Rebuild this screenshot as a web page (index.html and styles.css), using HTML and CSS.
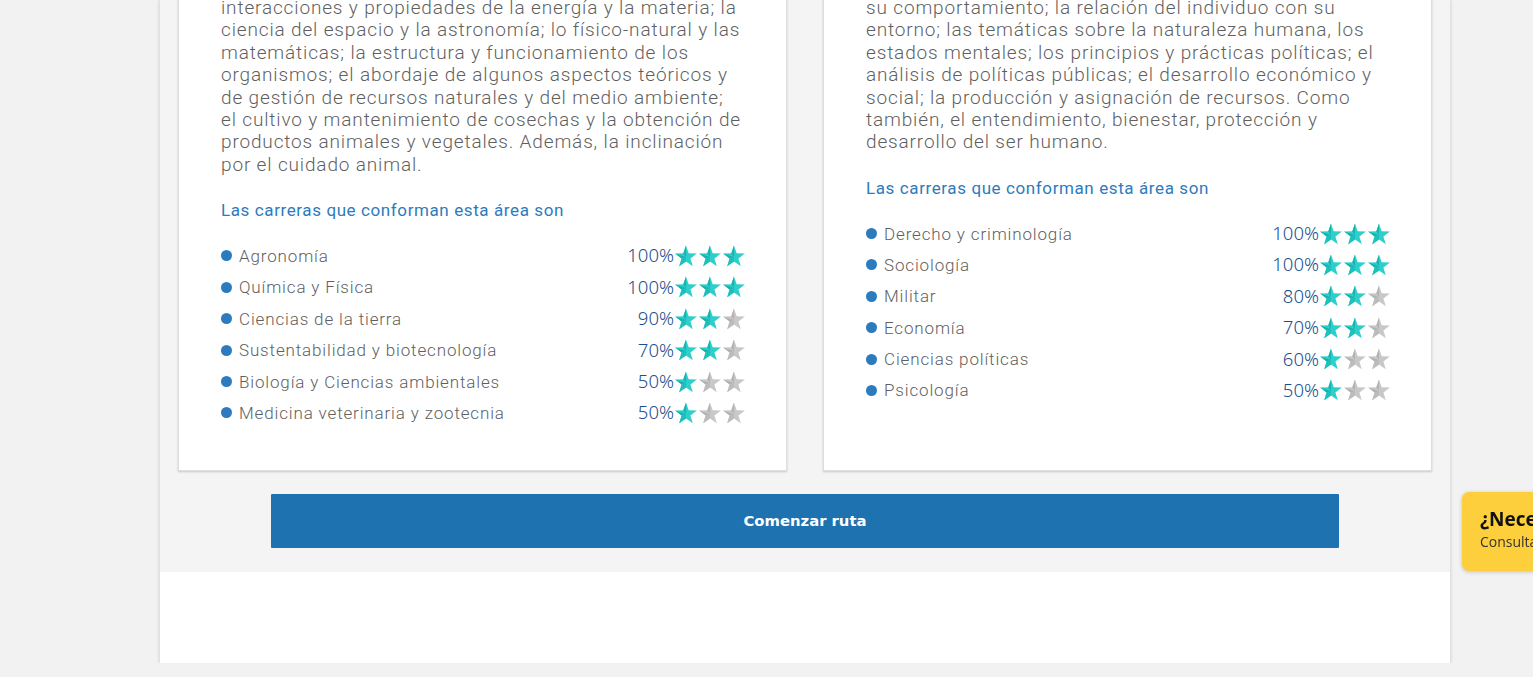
FILE: index.html
```html
<!DOCTYPE html>
<html lang="es">
<head>
<meta charset="utf-8">
<title>Áreas de interés</title>
<link rel="stylesheet" href="styles.css">
</head>
<body>
<svg width="0" height="0" class="defs">
  <defs>
    <symbol id="star-on" viewBox="0 0 24 24">
      <polygon fill="#2dcfcb" points="12,1.5 14.7,9.3 22.9,9.5 16.4,14.4 18.8,22.3 12,17.6 5.2,22.3 7.6,14.4 1.1,9.5 9.3,9.3"/>
      <polygon fill="#17b3ae" points="12,1.5 12,13 9.3,9.3"/>
      <polygon fill="#17b3ae" points="1.1,9.5 12,13 7.6,14.4"/>
      <polygon fill="#1fc0bb" points="12,13 12,17.6 5.2,22.3 7.6,14.4"/>
    </symbol>
    <symbol id="star-off" viewBox="0 0 24 24">
      <polygon fill="#c8c8c8" points="12,1.5 14.7,9.3 22.9,9.5 16.4,14.4 18.8,22.3 12,17.6 5.2,22.3 7.6,14.4 1.1,9.5 9.3,9.3"/>
      <polygon fill="#b3b3b3" points="12,1.5 12,13 9.3,9.3"/>
      <polygon fill="#b3b3b3" points="1.1,9.5 12,13 7.6,14.4"/>
      <polygon fill="#bcbcbc" points="12,13 12,17.6 5.2,22.3 7.6,14.4"/>
    </symbol>
  </defs>
</svg>

<main class="page">
  <section class="areas">
    <div class="cards">
      <article class="card">
        <p class="desc">interacciones y propiedades de la energía y la materia; la<br>ciencia del espacio y la astronomía; lo físico-natural y las<br>matemáticas; la estructura y funcionamiento de los<br>organismos; el abordaje de algunos aspectos teóricos y<br>de gestión de recursos naturales y del medio ambiente;<br>el cultivo y mantenimiento de cosechas y la obtención de<br>productos animales y vegetales. Además, la inclinación<br>por el cuidado animal.</p>
        <h3 class="careers-title">Las carreras que conforman esta área son</h3>
        <ul class="careers">
          <li class="career"><span class="dot"></span><span class="name">Agronomía</span><span class="pct">100%</span><span class="stars"><svg><use href="#star-on"/></svg><svg><use href="#star-on"/></svg><svg><use href="#star-on"/></svg></span></li>
          <li class="career"><span class="dot"></span><span class="name">Química y Física</span><span class="pct">100%</span><span class="stars"><svg><use href="#star-on"/></svg><svg><use href="#star-on"/></svg><svg><use href="#star-on"/></svg></span></li>
          <li class="career"><span class="dot"></span><span class="name">Ciencias de la tierra</span><span class="pct">90%</span><span class="stars"><svg><use href="#star-on"/></svg><svg><use href="#star-on"/></svg><svg><use href="#star-off"/></svg></span></li>
          <li class="career"><span class="dot"></span><span class="name">Sustentabilidad y biotecnología</span><span class="pct">70%</span><span class="stars"><svg><use href="#star-on"/></svg><svg><use href="#star-on"/></svg><svg><use href="#star-off"/></svg></span></li>
          <li class="career"><span class="dot"></span><span class="name">Biología y Ciencias ambientales</span><span class="pct">50%</span><span class="stars"><svg><use href="#star-on"/></svg><svg><use href="#star-off"/></svg><svg><use href="#star-off"/></svg></span></li>
          <li class="career"><span class="dot"></span><span class="name">Medicina veterinaria y zootecnia</span><span class="pct">50%</span><span class="stars"><svg><use href="#star-on"/></svg><svg><use href="#star-off"/></svg><svg><use href="#star-off"/></svg></span></li>
        </ul>
      </article>

      <article class="card">
        <p class="desc">su comportamiento; la relación del individuo con su<br>entorno; las temáticas sobre la naturaleza humana, los<br>estados mentales; los principios y prácticas políticas; el<br>análisis de políticas públicas; el desarrollo económico y<br>social; la producción y asignación de recursos. Como<br>también, el entendimiento, bienestar, protección y<br>desarrollo del ser humano.</p>
        <h3 class="careers-title">Las carreras que conforman esta área son</h3>
        <ul class="careers">
          <li class="career"><span class="dot"></span><span class="name">Derecho y criminología</span><span class="pct">100%</span><span class="stars"><svg><use href="#star-on"/></svg><svg><use href="#star-on"/></svg><svg><use href="#star-on"/></svg></span></li>
          <li class="career"><span class="dot"></span><span class="name">Sociología</span><span class="pct">100%</span><span class="stars"><svg><use href="#star-on"/></svg><svg><use href="#star-on"/></svg><svg><use href="#star-on"/></svg></span></li>
          <li class="career"><span class="dot"></span><span class="name">Militar</span><span class="pct">80%</span><span class="stars"><svg><use href="#star-on"/></svg><svg><use href="#star-on"/></svg><svg><use href="#star-off"/></svg></span></li>
          <li class="career"><span class="dot"></span><span class="name">Economía</span><span class="pct">70%</span><span class="stars"><svg><use href="#star-on"/></svg><svg><use href="#star-on"/></svg><svg><use href="#star-off"/></svg></span></li>
          <li class="career"><span class="dot"></span><span class="name">Ciencias políticas</span><span class="pct">60%</span><span class="stars"><svg><use href="#star-on"/></svg><svg><use href="#star-off"/></svg><svg><use href="#star-off"/></svg></span></li>
          <li class="career"><span class="dot"></span><span class="name">Psicología</span><span class="pct">50%</span><span class="stars"><svg><use href="#star-on"/></svg><svg><use href="#star-off"/></svg><svg><use href="#star-off"/></svg></span></li>
        </ul>
      </article>
    </div>
    <div class="actions">
      <button class="start-btn" type="button">Comenzar ruta</button>
    </div>
  </section>
  <div class="page-foot"></div>
</main>

<aside class="help-tab">
  <div class="help-title">¿Necesitas ayuda?</div>
  <div class="help-sub">Consulta aquí</div>
</aside>
</body>
</html>
```

FILE: styles.css
```css
html, body {
  margin: 0;
  padding: 0;
}

body {
  background: #f2f2f2;
  font-family: Roboto, "Liberation Sans", sans-serif;
  overflow: hidden;
}

.defs {
  position: absolute;
  width: 0;
  height: 0;
}

.page {
  width: 1290px;
  margin: -3px 0 0 160px;
  background: #fff;
  box-shadow: 0 2px 4px rgba(0, 0, 0, 0.18);
}

.areas {
  background: #f4f4f4;
  padding: 0 18px 24px;
}

.cards {
  display: grid;
  grid-template-columns: 1fr 1fr;
  gap: 36px;
}

.card {
  background: #fff;
  border: 1px solid #dedede;
  border-top: 0;
  box-shadow: 0 1px 2px rgba(0, 0, 0, 0.18);
  padding: 0 42px 41px;
}

.desc {
  margin: 0;
  font-size: 19px;
  line-height: 22.4px;
  font-weight: 300;
  letter-spacing: 0.85px;
  color: #5f5f5f;
  white-space: nowrap;
}

.careers-title {
  margin: 24px 0 0;
  font-size: 17px;
  line-height: 20px;
  font-weight: 400;
  letter-spacing: 0.6px;
  color: #2d7bbd;
}

.careers {
  list-style: none;
  margin: 20px 0 0;
  padding: 0;
}

.career {
  display: flex;
  align-items: center;
  height: 31.4px;
}

.dot {
  width: 11px;
  height: 11px;
  border-radius: 50%;
  background: #2c7bbf;
  margin-right: 7px;
  flex: none;
}

.name {
  flex: 1;
  font-size: 17px;
  font-weight: 300;
  letter-spacing: 0.85px;
  color: #5f5f5f;
}

.pct {
  font-family: "Noto Sans", sans-serif;
  font-size: 18.5px;
  font-weight: 300;
  color: #1b4f8e;
  position: relative;
  top: -1px;
}

.stars {
  display: flex;
  margin-right: -2px;
}

.stars svg {
  width: 24px;
  height: 24px;
  display: block;
}

.actions {
  display: flex;
  justify-content: center;
  padding-top: 23px;
}

.start-btn {
  width: 1068px;
  height: 54px;
  border: 0;
  border-radius: 1px;
  background: #1e72b0;
  color: #fff;
  font-family: "DejaVu Sans", sans-serif;
  font-weight: 700;
  font-size: 14.8px;
  cursor: pointer;
}

.page-foot {
  height: 91px;
}

.help-tab {
  position: fixed;
  left: 1462px;
  top: 492px;
  width: 140px;
  height: 79px;
  box-sizing: border-box;
  padding: 14px 0 0 18px;
  background: #fecf3c;
  border-radius: 7px;
  box-shadow: 0 1px 4px rgba(0, 0, 0, 0.2);
  white-space: nowrap;
  overflow: hidden;
  font-family: "Open Sans", "Noto Sans", sans-serif;
  color: #111;
}

.help-title {
  font-size: 19px;
  font-weight: 700;
  line-height: 26px;
}

.help-sub {
  font-size: 14px;
  line-height: 20px;
  color: #333;
}
```
